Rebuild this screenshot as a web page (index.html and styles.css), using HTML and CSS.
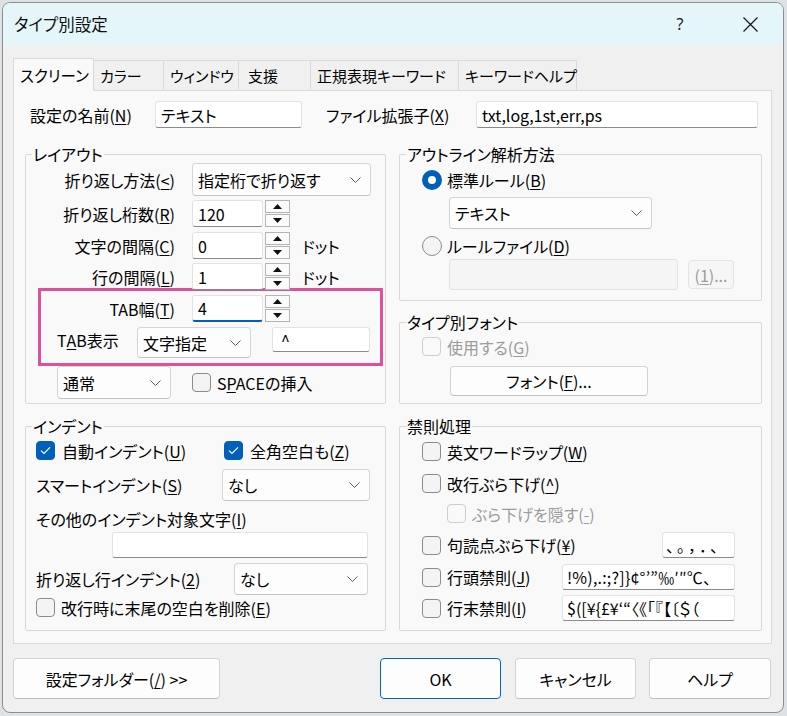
FILE: index.html
```html
<!DOCTYPE html>
<html lang="ja">
<head>
<meta charset="utf-8">
<title>タイプ別設定</title>
<link rel="stylesheet" href="styles.css">
</head>
<body>
<div class="window">
  <div class="titlebar">
    <span class="title">タイプ別設定</span>
    <span class="help-q">?</span>
    <span class="close"><svg width="15" height="15" viewBox="0 0 15 15"><path d="M0.5 0.5L14.5 14.5M14.5 0.5L0.5 14.5" stroke="#1a1a1a" stroke-width="1.3" fill="none"/></svg></span>
  </div>
  <div class="content">
    <div class="tabs">
      <div class="tab active t1">スクリーン</div>
      <div class="tab t2">カラー</div>
      <div class="tab t3">ウィンドウ</div>
      <div class="tab t4">支援</div>
      <div class="tab t5">正規表現キーワード</div>
      <div class="tab t6 last">キーワードヘルプ</div>
    </div>
    <div class="panel">
      <div class="name-row">
        <span class="lbl-name">設定の名前(<u>N</u>)</span>
        <div class="input in-name">テキスト</div>
        <span class="lbl-ext">ファイル拡張子(<u>X</u>)</span>
        <div class="input in-ext">txt,log,1st,err,ps</div>
      </div>
      <div class="cols">
        <div class="group g-layout">
          <div class="gtitle">レイアウト</div>
          <div class="row lrow first">
            <span class="rlabel">折り返し方法(<u>&lt;</u>)</span>
            <div class="select sel-wrap"><span>指定桁で折り返す</span><svg class="chev" width="11" height="6" viewBox="0 0 11 6"><path d="M0.5 0.5L5.5 5.5L10.5 0.5" fill="none" stroke="#5a5a5a" stroke-width="1"/></svg></div>
          </div>
          <div class="row lrow r2">
            <span class="rlabel">折り返し桁数(<u>R</u>)</span>
            <div class="input in-spin">120</div>
            <div class="spinbtns">
              <div class="sb"><svg width="9" height="5" viewBox="0 0 9 5"><path d="M4.5 0L9 5H0Z" fill="#111"/></svg></div>
              <div class="sb"><svg width="9" height="5" viewBox="0 0 9 5"><path d="M0 0H9L4.5 5Z" fill="#111"/></svg></div>
            </div>
          </div>
          <div class="row lrow r3">
            <span class="rlabel">文字の間隔(<u>C</u>)</span>
            <div class="input in-spin">0</div>
            <div class="spinbtns">
              <div class="sb"><svg width="9" height="5" viewBox="0 0 9 5"><path d="M4.5 0L9 5H0Z" fill="#111"/></svg></div>
              <div class="sb"><svg width="9" height="5" viewBox="0 0 9 5"><path d="M0 0H9L4.5 5Z" fill="#111"/></svg></div>
            </div>
            <span class="unit">ドット</span>
          </div>
          <div class="row lrow r4">
            <span class="rlabel">行の間隔(<u>L</u>)</span>
            <div class="input in-spin">1</div>
            <div class="spinbtns">
              <div class="sb"><svg width="9" height="5" viewBox="0 0 9 5"><path d="M4.5 0L9 5H0Z" fill="#111"/></svg></div>
              <div class="sb"><svg width="9" height="5" viewBox="0 0 9 5"><path d="M0 0H9L4.5 5Z" fill="#111"/></svg></div>
            </div>
            <span class="unit">ドット</span>
          </div>
          <div class="highlight">
            <div class="row lrow">
              <span class="rlabel hl-label">TAB幅(<u>T</u>)</span>
              <div class="input in-spin focused">4</div>
              <div class="spinbtns">
                <div class="sb"><svg width="9" height="5" viewBox="0 0 9 5"><path d="M4.5 0L9 5H0Z" fill="#111"/></svg></div>
                <div class="sb"><svg width="9" height="5" viewBox="0 0 9 5"><path d="M0 0H9L4.5 5Z" fill="#111"/></svg></div>
              </div>
            </div>
            <div class="row tabdisp">
              <span class="lbl-tabdisp">T<u>A</u>B表示</span>
              <div class="select sel-tab"><span>文字指定</span><svg class="chev" width="11" height="6" viewBox="0 0 11 6"><path d="M0.5 0.5L5.5 5.5L10.5 0.5" fill="none" stroke="#5a5a5a" stroke-width="1"/></svg></div>
              <div class="input in-caret">^</div>
            </div>
          </div>
          <div class="row space-row">
            <div class="select sel-normal"><span>通常</span><svg class="chev" width="11" height="6" viewBox="0 0 11 6"><path d="M0.5 0.5L5.5 5.5L10.5 0.5" fill="none" stroke="#5a5a5a" stroke-width="1"/></svg></div>
            <span class="cb cb-space"></span>
            <span>S<u>P</u>ACEの挿入</span>
          </div>
        </div>

        <div class="right-stack">
          <div class="group g-outline">
            <div class="gtitle">アウトライン解析方法</div>
            <div class="row radio-row rr1">
              <span class="radio on"></span>
              <span>標準ルール(<u>B</u>)</span>
            </div>
            <div class="select sel-outline"><span>テキスト</span><svg class="chev" width="11" height="6" viewBox="0 0 11 6"><path d="M0.5 0.5L5.5 5.5L10.5 0.5" fill="none" stroke="#5a5a5a" stroke-width="1"/></svg></div>
            <div class="row radio-row rr2">
              <span class="radio"></span>
              <span>ルールファイル(<u>D</u>)</span>
            </div>
            <div class="row path-row">
              <div class="input disabled in-path"></div>
              <div class="btn disabled btn-ref">(<u>1</u>)...</div>
            </div>
          </div>
          <div class="group g-font">
            <div class="gtitle">タイプ別フォント</div>
            <div class="row check-row fr1">
              <span class="cb dis"></span>
              <span class="dis-text">使用する(<u>G</u>)</span>
            </div>
            <div class="btn btn-font">フォント(<u>F</u>)...</div>
          </div>
        </div>

        <div class="group g-indent">
          <div class="gtitle">インデント</div>
          <div class="row check-row ir1">
            <div class="ci ci-auto">
              <span class="cb on"><svg width="17" height="17" viewBox="0 0 17 17"><path d="M4 8.6L7 11.4L13 5.4" fill="none" stroke="#fff" stroke-width="1.2"/></svg></span>
              <span>自動インデント(<u>U</u>)</span>
            </div>
            <div class="ci">
              <span class="cb on"><svg width="17" height="17" viewBox="0 0 17 17"><path d="M4 8.6L7 11.4L13 5.4" fill="none" stroke="#fff" stroke-width="1.2"/></svg></span>
              <span>全角空白も(<u>Z</u>)</span>
            </div>
          </div>
          <div class="row smart-row">
            <span class="lbl-smart">スマートインデント(<u>S</u>)</span>
            <div class="select sel-smart"><span>なし</span><svg class="chev" width="11" height="6" viewBox="0 0 11 6"><path d="M0.5 0.5L5.5 5.5L10.5 0.5" fill="none" stroke="#5a5a5a" stroke-width="1"/></svg></div>
          </div>
          <div class="other-label">その他のインデント対象文字(<u>I</u>)</div>
          <div class="input in-other"></div>
          <div class="row wrapind-row">
            <span class="lbl-wrapind">折り返し行インデント(<u>2</u>)</span>
            <div class="select sel-wrapind"><span>なし</span><svg class="chev" width="11" height="6" viewBox="0 0 11 6"><path d="M0.5 0.5L5.5 5.5L10.5 0.5" fill="none" stroke="#5a5a5a" stroke-width="1"/></svg></div>
          </div>
          <div class="row check-row ir-last">
            <span class="cb"></span>
            <span>改行時に末尾の空白を削除(<u>E</u>)</span>
          </div>
        </div>

        <div class="group g-kinsoku">
          <div class="gtitle">禁則処理</div>
          <div class="row check-row k1">
            <span class="cb"></span>
            <span>英文ワードラップ(<u>W</u>)</span>
          </div>
          <div class="row check-row k2">
            <span class="cb"></span>
            <span>改行ぶら下げ(<u>^</u>)</span>
          </div>
          <div class="row check-row k3">
            <span class="cb dis"></span>
            <span class="dis-text">ぶら下げを隠す(<u>-</u>)</span>
          </div>
          <div class="row k-in-row k4">
            <span class="cb"></span>
            <span>句読点ぶら下げ(<u>¥</u>)</span>
            <div class="input in-kuto">、。，．、</div>
          </div>
          <div class="row k-in-row k5">
            <span class="cb"></span>
            <span>行頭禁則(<u>J</u>)</span>
            <div class="input in-kin in-head">!%),.:;?]}¢°’”‰′″℃、</div>
          </div>
          <div class="row k-in-row k6">
            <span class="cb"></span>
            <span>行末禁則(<u>I</u>)</span>
            <div class="input in-kin">$([¥{£¥‘“〈《「『【〔＄（</div>
          </div>
        </div>
      </div>
    </div>
    <div class="buttons">
      <div class="btn btn-folder">設定フォルダー(<u>/</u>) &gt;&gt;</div>
      <div class="btn btn-ok">OK</div>
      <div class="btn btn-cancel">キャンセル</div>
      <div class="btn btn-help">ヘルプ</div>
    </div>
  </div>
</div>
</body>
</html>
```

FILE: styles.css
```css
* { box-sizing: border-box; }
html, body { margin: 0; padding: 0; }
body {
  width: 787px;
  height: 716px;
  overflow: hidden;
  background: #dfe2e5;
  font-family: "Noto Sans CJK JP", "Noto Sans", sans-serif;
  font-size: 16px;
  line-height: 20px;
  color: #000;
  font-feature-settings: "palt" 1;
}
u { text-underline-offset: 2px; text-decoration-thickness: 1px; }

.window {
  width: 782px;
  height: 711px;
  margin: 2px 0 0 2px;
  border: 1px solid #8e8e8e;
  border-radius: 8px;
  overflow: hidden;
  background: #f0f0f0;
}
.titlebar {
  height: 42px;
  background: #e5f6fa;
  display: flex;
  align-items: center;
  padding: 0 25px 0 11px;
}
.title { font-size: 16.5px; color: #111; }
.help-q {
  margin-left: auto;
  width: 14px;
  text-align: center;
  font-family: "Noto Sans", sans-serif;
  font-size: 16px;
  color: #1a1a1a;
}
.close { margin-left: 56px; display: flex; }

.content { padding-left: 10px; }

.tabs {
  margin-top: 13px;
  height: 32px;
  display: flex;
  align-items: flex-end;
}
.tab {
  height: 30px;
  border: 1px solid #dadada;
  border-bottom: none;
  background: #f0f0f0;
  padding-left: 6px;
  display: flex;
  align-items: center;
  margin-right: -1px;
  white-space: nowrap;
  font-size: 15px;
  flex-shrink: 0;
}
.tab.active {
  height: 33px;
  margin-bottom: -1px;
  background: #f9f9f9;
  position: relative;
  z-index: 2;
  font-size: 15.5px;
}
.t1 { width: 81px; }
.t2 { width: 71px; }
.t3 { width: 76px; }
.t4 { width: 73px; padding-left: 9px; }
.t5 { width: 149px; }
.t6 { width: 119px; }

.panel {
  width: 759px;
  height: 554px;
  border: 1px solid #dadada;
  background: #f9f9f9;
  padding: 10px 0 0 11px;
}

.row { display: flex; align-items: center; }
.name-row { display: flex; align-items: center; height: 27px; padding-left: 5px; }
.lbl-name { width: 125px; }
.lbl-ext { width: 150px; margin-left: 24px; }

.input {
  background: #fff;
  border: 1px solid #e3e3e3;
  border-bottom-color: #8a8a8a;
  border-radius: 3px;
  height: 27px;
  padding-left: 5px;
  display: flex;
  align-items: center;
  white-space: nowrap;
  overflow: hidden;
  flex-shrink: 0;
}
.input.focused { border-bottom: 2px solid #005fb8; }
.input.disabled { background: #f5f5f5; border-color: #e2e2e2; }
.in-name { width: 147px; }
.in-ext { width: 282px; }

.select {
  display: flex;
  align-items: center;
  justify-content: space-between;
  background: #fdfdfd;
  border: 1px solid #d5d5d5;
  border-bottom-color: #c4c4c4;
  border-radius: 4px;
  padding: 0 9px 0 5px;
  flex-shrink: 0;
  white-space: nowrap;
}

.cols {
  margin-top: 26px;
  display: grid;
  grid-template-columns: 361px 363px;
  grid-template-rows: 250px 205px;
  column-gap: 13px;
  row-gap: 22px;
}
.right-stack { display: flex; flex-direction: column; gap: 21px; }
.group { border: 1px solid #d8d8d8; border-radius: 2px; }
.g-outline { height: 147px; }
.g-font { height: 82px; }
.gtitle {
  width: fit-content;
  margin: -11px 0 0 6px;
  padding: 0 1px;
  height: 20px;
  line-height: 20px;
  background: #f9f9f9;
}

/* layout group */
.lrow { height: 27px; }
.lrow.first { height: 33px; margin-top: -1px; }
.lrow.r2 { margin-top: 4px; }
.lrow.r3 { margin-top: 5px; }
.lrow.r4 { margin-top: 4px; }
.rlabel { width: 149px; text-align: right; margin-right: 17px; flex-shrink: 0; white-space: nowrap; }
.hl-label { width: 134px; }
.sel-wrap { width: 179px; height: 33px; }
.in-spin { width: 71px; }
.spinbtns { margin-left: 2px; display: flex; flex-direction: column; gap: 1px; }
.sb {
  width: 25px;
  height: 13px;
  border: 1px solid #b4b4b4;
  background: #fbfbfb;
  display: flex;
  align-items: center;
  justify-content: center;
}
.unit { margin-left: 12px; }

.highlight {
  margin: -2px 0 0 12px;
  width: 345px;
  height: 78px;
  border: 3px solid #de509c;
  padding-top: 4px;
}
.tabdisp { margin-top: 5px; align-items: flex-start; padding-left: 16px; }
.lbl-tabdisp { width: 80px; height: 25px; display: flex; align-items: center; }
.sel-tab { width: 114px; height: 31px; }
.in-caret { width: 98px; height: 25px; margin-left: 21px; padding-left: 8px; }

.space-row { height: 33px; padding-left: 31px; }
.sel-normal { width: 114px; height: 33px; }
.cb-space { margin-left: 21px; }

/* checkboxes & radios */
.cb {
  width: 19px;
  height: 19px;
  border: 1px solid #8b8b8b;
  border-radius: 4px;
  background: #f4f4f4;
  margin-right: 6px;
  flex-shrink: 0;
  display: flex;
  align-items: center;
  justify-content: center;
}
.cb.on { background: #005fb8; border-color: #005fb8; }
.cb.dis { border-color: #cdcdcd; background: #f9f9f9; }
.dis-text { color: #9c9c9c; }
.radio {
  width: 20px;
  height: 20px;
  border-radius: 50%;
  border: 1px solid #8b8b8b;
  background: #f4f4f4;
  margin-right: 5px;
  flex-shrink: 0;
}
.radio.on { background: #fff; border: 6px solid #005fb8; }
.check-row { height: 19px; }

/* outline */
.radio-row { height: 20px; padding-left: 22px; }
.rr1 { margin-top: 6px; }
.sel-outline { margin: 7px 0 0 49px; width: 203px; height: 32px; }
.rr2 { margin-top: 7px; }
.path-row { margin-top: 3px; padding-left: 49px; }
.in-path { width: 229px; height: 31px; }
.btn {
  background: #fdfdfd;
  border: 1px solid #d3d3d3;
  border-bottom-color: #c0c0c0;
  border-radius: 4px;
  display: flex;
  align-items: center;
  justify-content: center;
  white-space: nowrap;
  flex-shrink: 0;
}
.btn.disabled { background: #f6f6f6; border-color: #e3e3e3; color: #9c9c9c; }
.btn-ref { width: 46px; height: 29px; margin-left: 10px; }

/* font */
.fr1 { margin-top: 5px; padding-left: 22px; }
.btn-font { margin: 10px 0 0 50px; width: 198px; height: 30px; }

/* indent */
.ir1 { margin-top: 5px; padding-left: 10px; }
.ci { display: flex; align-items: center; }
.ci-auto { width: 188px; }
.ci .cb { margin-right: 7px; }
.smart-row { margin-top: 9px; padding-left: 10px; }
.lbl-smart { width: 186px; }
.sel-smart { width: 148px; height: 32px; }
.other-label { margin-top: 8px; padding-left: 10px; height: 20px; }
.in-other { margin: 3px 0 0 86px; width: 256px; height: 26px; }
.wrapind-row { margin-top: 5px; padding-left: 10px; }
.lbl-wrapind { width: 198px; }
.sel-wrapind { width: 134px; height: 32px; }
.ir-last { margin-top: 3px; padding-left: 10px; }

/* kinsoku */
.g-kinsoku .row { padding-left: 22px; padding-right: 26px; }
.k1 { margin-top: 6px; }
.k2 { margin-top: 13px; }
.k3 { margin-top: 11px; }
.g-kinsoku .k3 { padding-left: 47px; }
.k-in-row { height: 26px; }
.k4 { margin-top: 9px; }
.k5 { margin-top: 6px; }
.k6 { margin-top: 5px; }
.in-kuto { margin-left: auto; width: 73px; height: 26px; font-feature-settings: normal; padding-left: 3px; letter-spacing: 3px; }
.in-kin { margin-left: auto; width: 173px; height: 26px; padding-left: 4px; }
.in-head { font-feature-settings: normal; letter-spacing: 0.2px; }

/* bottom buttons */
.buttons { display: flex; margin-top: 14px; }
.buttons .btn { height: 41px; }
.btn-folder { width: 207px; }
.btn-ok { width: 121px; margin-left: 160px; border-color: #0067c0; }
.btn-cancel { width: 121px; margin-left: 14px; }
.btn-help { width: 122px; margin-left: 13px; }
```
